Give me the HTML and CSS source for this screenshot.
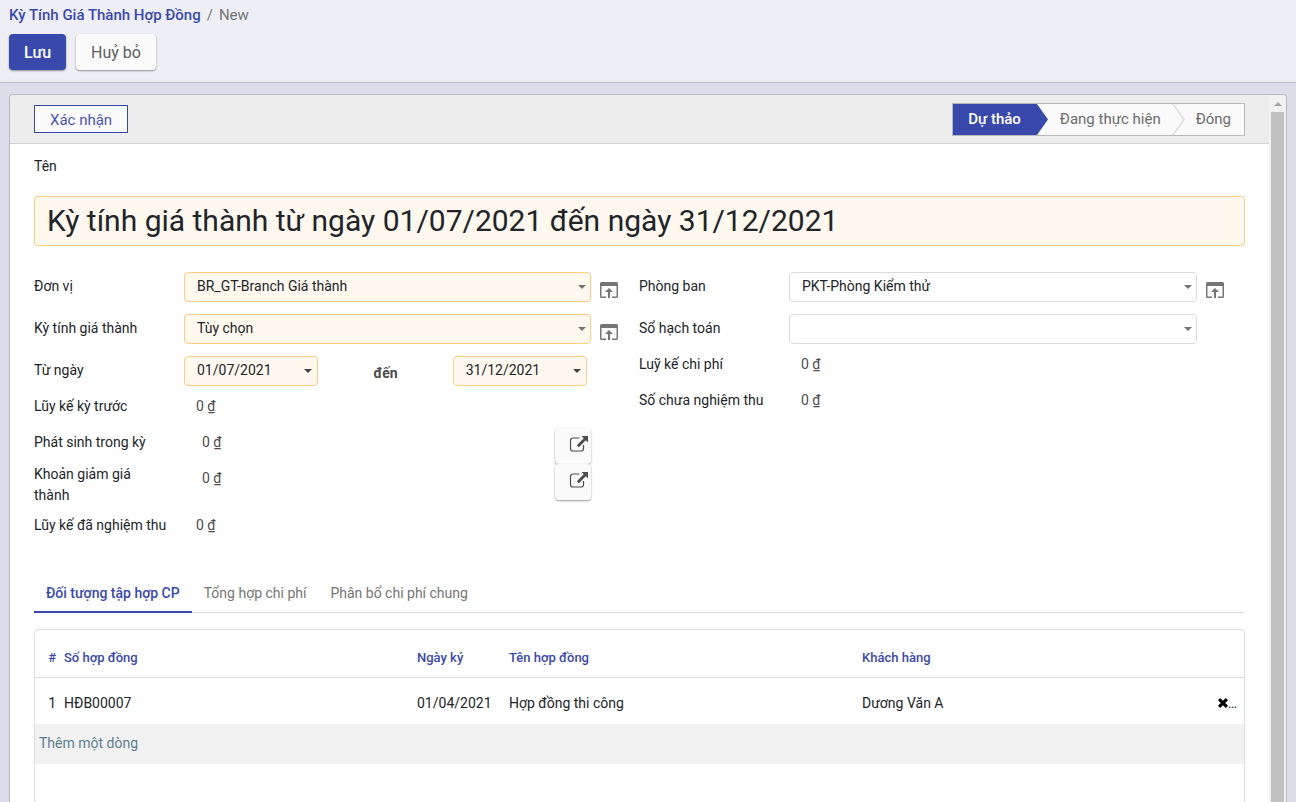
FILE: index.html
```html
<!DOCTYPE html>
<html lang="vi">
<head>
<meta charset="utf-8">
<title>Kỳ Tính Giá Thành Hợp Đồng</title>
<link rel="stylesheet" href="styles.css">
</head>
<body>
<svg class="defs" aria-hidden="true">
  <symbol id="open" viewBox="0 0 18 16"><path d="M1.500 0h15A1.500 1.500 0 0 1 18 1.500v13a1.500 1.500 0 0 1-1.500 1.500H12v-1.500h4.500V4h-15v10.500H6V16H1.500A1.500 1.500 0 0 1 0 14.500v-13A1.500 1.500 0 0 1 1.500 0zM9 6l4 4h-3v6H8v-6H5z"/></symbol>
  <symbol id="external" viewBox="0 0 20 18"><path d="M10.500 3H4a2.500 2.500 0 0 0-2.500 2.500v8A2.500 2.500 0 0 0 4 16h8a2.500 2.500 0 0 0 2.500-2.500V10" fill="none" stroke="currentColor" stroke-width="1.200"/><path d="M12.500 1H19v6.500l-2.200-2.200-7 7-2-2 7-7z"/></symbol>
  <symbol id="caret" viewBox="0 0 8 4"><path d="M0 0h8L4 4z"/></symbol>
</svg>
<header class="control-panel">
  <nav class="breadcrumb" aria-label="Breadcrumb"><a href="#">Kỳ Tính Giá Thành Hợp Đồng</a><span class="slash">/</span><span>New</span></nav>
  <div class="actions">
    <button class="btn btn-primary" type="button">Lưu</button>
    <button class="btn" type="button">Huỷ bỏ</button>
  </div>
</header>
<main class="content">
  <div class="frame">
    <form class="form">
      <div class="statusbar">
        <button class="btn-outline" type="button">Xác nhận</button>
        <div class="steps">
          <button class="step step-active" type="button">Dự thảo<svg class="arrow" viewBox="0 0 11 31" preserveAspectRatio="none"><path class="arrow-fill" d="M0 0l11 15.500L0 31z"/></svg></button>
          <button class="step" type="button">Đang thực hiện<svg class="arrow" viewBox="0 0 11 31" preserveAspectRatio="none"><path class="arrow-line" d="M0 0l11 15.500L0 31"/></svg></button>
          <button class="step step-last" type="button">Đóng</button>
        </div>
      </div>
      <div class="sheet">
        <label class="title-label" for="name">Tên</label>
        <input class="title-input required" id="name" type="text" value="Kỳ tính giá thành từ ngày 01/07/2021 đến ngày 31/12/2021">
        <div class="groups">
          <div class="group">
            <div class="row row-gap">
              <label class="label" for="unit">Đơn vị</label>
              <div class="field"><select class="control required" id="unit"><option>BR_GT-Branch Giá thành</option></select><svg class="caret"><use href="#caret"/></svg></div>
              <button class="open" type="button" aria-label="Mở đơn vị"><svg class="open-icon"><use href="#open"/></svg></button>
            </div>
            <div class="row row-gap">
              <label class="label" for="period">Kỳ tính giá thành</label>
              <div class="field"><select class="control required" id="period"><option>Tùy chọn</option></select><svg class="caret"><use href="#caret"/></svg></div>
              <button class="open" type="button" aria-label="Mở kỳ tính giá thành"><svg class="open-icon"><use href="#open"/></svg></button>
            </div>
            <div class="row">
              <label class="label" for="from">Từ ngày</label>
              <div class="dates">
                <div class="field"><input class="control required" id="from" type="text" value="01/07/2021"><svg class="caret caret-dark"><use href="#caret"/></svg></div>
                <label class="to" for="to">đến</label>
                <div class="field"><input class="control required" id="to" type="text" value="31/12/2021"><svg class="caret caret-dark"><use href="#caret"/></svg></div>
              </div>
            </div>
            <div class="row"><span class="label">Lũy kế kỳ trước</span><span class="value">0 ₫</span></div>
            <div class="row"><span class="label">Phát sinh trong kỳ</span><span class="value value-inset">0 ₫</span><button class="btn btn-icon" type="button" aria-label="Chi tiết phát sinh"><svg class="external"><use href="#external"/></svg></button></div>
            <div class="row row-tall"><span class="label label-wrap">Khoản giảm giá thành</span><span class="value value-inset">0 ₫</span><button class="btn btn-icon" type="button" aria-label="Chi tiết giảm giá"><svg class="external"><use href="#external"/></svg></button></div>
            <div class="row"><span class="label">Lũy kế đã nghiệm thu</span><span class="value">0 ₫</span></div>
          </div>
          <div class="group">
            <div class="row row-gap">
              <label class="label" for="dept">Phòng ban</label>
              <div class="field"><select class="control" id="dept"><option>PKT-Phòng Kiểm thử</option></select><svg class="caret"><use href="#caret"/></svg></div>
              <button class="open" type="button" aria-label="Mở phòng ban"><svg class="open-icon"><use href="#open"/></svg></button>
            </div>
            <div class="row">
              <label class="label" for="ledger">Sổ hạch toán</label>
              <div class="field"><select class="control" id="ledger"><option></option></select><svg class="caret"><use href="#caret"/></svg></div>
              <span class="open"></span>
            </div>
            <div class="row"><span class="label">Luỹ kế chi phí</span><span class="value">0 ₫</span></div>
            <div class="row"><span class="label">Số chưa nghiệm thu</span><span class="value">0 ₫</span></div>
          </div>
        </div>
        <div class="tabs">
          <a class="tab tab-active" href="#">Đối tượng tập hợp CP</a>
          <a class="tab" href="#">Tổng hợp chi phí</a>
          <a class="tab" href="#">Phân bổ chi phí chung</a>
        </div>
        <div class="table-box">
          <table class="lines">
            <colgroup><col class="col-num"><col><col class="col-date"><col><col><col class="col-del"></colgroup>
            <thead>
              <tr><th class="num">#</th><th>Số hợp đồng</th><th>Ngày ký</th><th>Tên hợp đồng</th><th>Khách hàng</th><th></th></tr>
            </thead>
            <tbody>
              <tr><td class="num">1</td><td>HĐB00007</td><td>01/04/2021</td><td>Hợp đồng thi công</td><td>Dương Văn A</td>
                <td><span class="del-cell"><button class="delete" type="button" aria-label="Xoá"><svg class="x-icon" viewBox="0 0 10 10"><path d="M2.200 0L5 2.800 7.800 0 10 2.200 7.200 5 10 7.800 7.800 10 5 7.200 2.200 10 0 7.800 2.800 5 0 2.200z"/></svg></button>…</span></td></tr>
              <tr class="add-row"><td colspan="6"><a href="#">Thêm một dòng</a></td></tr>
            </tbody>
          </table>
        </div>
      </div>
    </form>
    <div class="scrollbar" aria-hidden="true"><svg class="scroll-up" viewBox="0 0 8 4"><path d="M4 0l4 4H0z"/></svg><div class="thumb"></div></div>
  </div>
</main>
</body>
</html>
```
FILE: styles.css
```css
* { box-sizing: border-box; }
body {
  margin: 0;
  height: 100vh;
  display: flex;
  flex-direction: column;
  overflow: hidden;
  background: #dcdeea;
  color: #212529;
  font: 14px/21px Roboto, "Noto Sans", sans-serif;
}
button, input, select { font: inherit; color: inherit; margin: 0; }
button { cursor: pointer; }
a { text-decoration: none; }
.defs { display: none; }

.control-panel {
  flex: none;
  height: 83px;
  padding: 4px 9px 0;
  background: #eeeff5;
  border-bottom: 1px solid #bdbdca;
}
.breadcrumb { font-size: 15px; line-height: 22px; color: #757575; }
.breadcrumb a { color: #3949ab; font-weight: 500; }
.slash { padding: 0 6px; }
.actions { display: flex; gap: 10px; padding-top: 8px; }
.btn {
  height: 36px;
  padding: 0 15px;
  border: 0;
  border-radius: 4px;
  background: #fafafa;
  color: #606060;
  font-size: 16px;
  box-shadow: 0 1px 2px rgba(0, 0, 0, .4);
}
.btn-primary { background: #3949ab; color: #fff; font-weight: 500; }

.content { flex: 1; min-height: 0; padding: 11px 9px 0; }
.frame {
  height: 100%;
  display: flex;
  overflow: hidden;
  border: 1px solid #b9b9c1;
  border-bottom: 0;
  border-radius: 4px 4px 0 0;
  background: #fff;
}
.form { flex: 1; min-width: 0; overflow: hidden; }
.statusbar {
  display: flex;
  justify-content: space-between;
  align-items: center;
  height: 49px;
  padding: 0 24px;
  background: #ededed;
  border-bottom: 1px solid #cfcfd6;
}
.btn-outline {
  height: 28px;
  padding: 2px 15px 0;
  border: 1px solid #3949ab;
  background: #fafafa;
  color: #4a58b2;
  font-size: 15px;
}
.steps { display: flex; height: 33px; border: 1px solid #b8b8b8; background: #fafafa; }
.step {
  position: relative;
  padding: 0 12px 0 23px;
  border: 0;
  background: none;
  color: #6c6c6c;
  font-size: 15px;
}
.step-last { padding-right: 13px; }
.step-active { padding: 0 16px 0 15px; background: #3949ab; color: #fff; font-weight: 500; }
.arrow { position: absolute; z-index: 1; left: 100%; top: 0; width: 11px; height: 100%; overflow: visible; }
.arrow-fill { fill: #3949ab; }
.arrow-line { fill: none; stroke: #c8c8c8; }

.sheet { padding: 12px 24px 0; }
.title-label { display: block; }
.title-input {
  display: block;
  width: 100%;
  height: 50px;
  margin: 19px 0 26px;
  padding: 0 12px 2px;
  border: 1px solid #ffcc80;
  border-radius: 4px;
  font-size: 30px;
}
.groups { display: grid; grid-template-columns: 605fr 606fr; }
.row { display: flex; align-items: flex-start; min-height: 36px; }
.row-gap { margin-bottom: 6px; }
.row-tall { min-height: 47px; }
.label { flex: none; width: 150px; padding-top: 4px; }
.label-wrap { padding: 0 40px 0 0; }
.field { position: relative; flex: 1; min-width: 0; }
.control {
  display: block;
  width: 100%;
  height: 30px;
  padding: 0 20px 2px 12px;
  border: 1px solid #dcdcdc;
  border-radius: 4px;
  background: #fff;
  appearance: none;
}
.required { background: #fff8ee; border-color: #ffcc80; }
.caret { position: absolute; right: 5px; top: 13px; width: 8px; height: 4px; fill: #757575; pointer-events: none; }
.caret-dark { right: 6px; fill: #444; }
.open { flex: none; width: 48px; height: 30px; padding: 6px 0 0 9px; border: 0; background: none; text-align: left; }
.open-icon { display: block; width: 18px; height: 16px; fill: #757575; }
.dates { flex: 1; display: grid; grid-template-columns: 1fr 1fr 1fr; padding-right: 52px; }
.to { padding-top: 7px; text-align: center; font-weight: 700; color: #4c4c4c; }
.value { flex: 1; padding: 4px 12px 0; color: #4c4c4c; }
.value-inset { padding-left: 18px; }
.btn-icon { width: 36px; margin-right: 48px; padding: 0 0 4px 14px; color: #4c4c4c; }
.external { display: block; width: 20px; height: 18px; fill: currentColor; }

.tabs { display: flex; margin: 26px 0 16px; border-bottom: 1px solid #dedede; }
.tab { height: 40px; margin-bottom: -1px; padding: 10px 12px; color: #757575; }
.tab-active { color: #3949ab; font-weight: 500; border-bottom: 2px solid #3949ab; }
.table-box { min-height: 200px; border: 1px solid #dedede; border-radius: 4px; }
.lines { width: 100%; table-layout: fixed; border-collapse: separate; border-spacing: 0; text-align: left; }
.col-num { width: 25px; }
.col-date { width: 92px; }
.col-del { width: 33px; }
.lines th { height: 48px; padding: 8px 4px 0; border-bottom: 1px solid #dedede; color: #3949ab; font-size: 13px; font-weight: 500; }
.lines td { height: 46px; padding: 4px 4px 0; white-space: nowrap; }
.lines .num { text-align: right; }
.lines .add-row td { height: 40px; padding: 0 4px 2px; background: #f1f1f1; }
.add-row a { color: #5a7f91; }
.del-cell { display: flex; align-items: center; justify-content: center; }
.delete { padding: 0; border: 0; background: none; }
.x-icon { display: block; width: 10px; height: 10px; fill: #000; }

.scrollbar { flex: none; width: 17px; display: flex; flex-direction: column; padding: 0 2px; background: #f1f1f1; }
.scroll-up { width: 8px; height: 4px; margin: 7px auto 6px 3px; fill: #a3a3a3; }
.thumb { flex: 1; background: #c1c1c1; }
```
